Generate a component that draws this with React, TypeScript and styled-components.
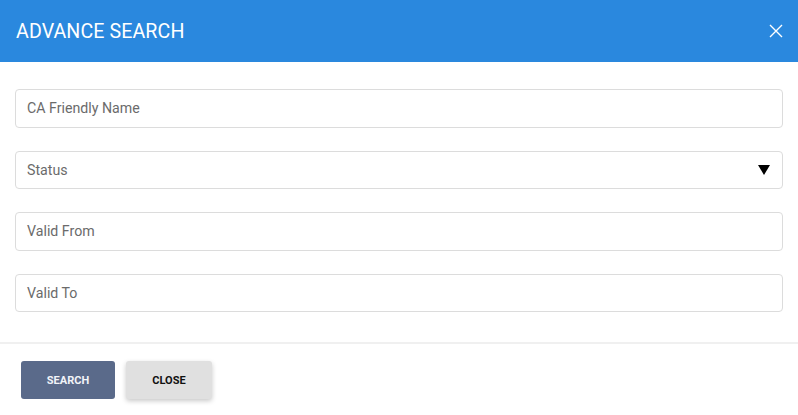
import React from "react";
import styled, { createGlobalStyle } from "styled-components";

const Global = createGlobalStyle`
  html, body { margin: 0; padding: 0; background: #fff; }
  body { font-family: Roboto, "Liberation Sans", Arial, sans-serif; }
  * { box-sizing: border-box; }
`;

const Modal = styled.div`
  width: 798px;
  height: 415px;
  display: flex;
  flex-direction: column;
  background: #fff;
`;

const Header = styled.div`
  height: 62px;
  flex: none;
  background: #2a88de;
  display: flex;
  align-items: center;
  justify-content: space-between;
  padding: 0 15px 0 16px;
`;

const Title = styled.h2`
  margin: 0;
  color: #fff;
  font-size: 19.6px;
  font-weight: 400;
  letter-spacing: 0.1px;
`;

const CloseIcon = styled.button`
  border: none;
  background: transparent;
  padding: 0;
  width: 14px;
  height: 14px;
  display: flex;
  cursor: pointer;
`;

const Body = styled.div`
  padding: 27px 15px 30px;
  display: flex;
  flex-direction: column;
  gap: 23px;
  border-bottom: 2px solid #f0f0f0;
`;

const Field = styled.div`
  position: relative;
  height: 38.5px;
  border: 1px solid #dcdcdc;
  border-radius: 4px;
  display: flex;
  align-items: center;
  padding: 0 11px;
  color: #6b6b6b;
  font-size: 14.2px;
`;

const Arrow = styled.span`
  position: absolute;
  right: 12px;
  top: 50%;
  transform: translateY(-50%);
  width: 0;
  height: 0;
  border-left: 6px solid transparent;
  border-right: 6px solid transparent;
  border-top: 10px solid #000;
`;

const Footer = styled.div`
  padding: 17px 21px 0;
  display: flex;
  gap: 11px;
`;

const Button = styled.button<{ $primary?: boolean }>`
  height: 38px;
  width: ${(p) => (p.$primary ? "94px" : "86px")};
  border: none;
  border-radius: 3px;
  font-family: Roboto, "Liberation Sans", Arial, sans-serif;
  font-weight: 700;
  font-size: 11px;
  background: ${(p) => (p.$primary ? "#5a6a8a" : "#e0e0e0")};
  color: ${(p) => (p.$primary ? "#f2f4f8" : "#111")};
  box-shadow: ${(p) => (p.$primary ? "none" : "0 2px 5px rgba(0,0,0,0.22)")};
  cursor: pointer;
`;

export default function App() {
  return (
    <>
      <Global />
      <Modal>
        <Header>
          <Title>ADVANCE SEARCH</Title>
          <CloseIcon aria-label="close">
            <svg width="14" height="14" viewBox="0 0 14 14">
              <path d="M1 1L13 13M13 1L1 13" stroke="#fff" strokeWidth="1.4" />
            </svg>
          </CloseIcon>
        </Header>
        <Body>
          <Field>CA Friendly Name</Field>
          <Field>
            Status
            <Arrow />
          </Field>
          <Field>Valid From</Field>
          <Field>Valid To</Field>
        </Body>
        <Footer>
          <Button $primary>SEARCH</Button>
          <Button>CLOSE</Button>
        </Footer>
      </Modal>
    </>
  );
}
